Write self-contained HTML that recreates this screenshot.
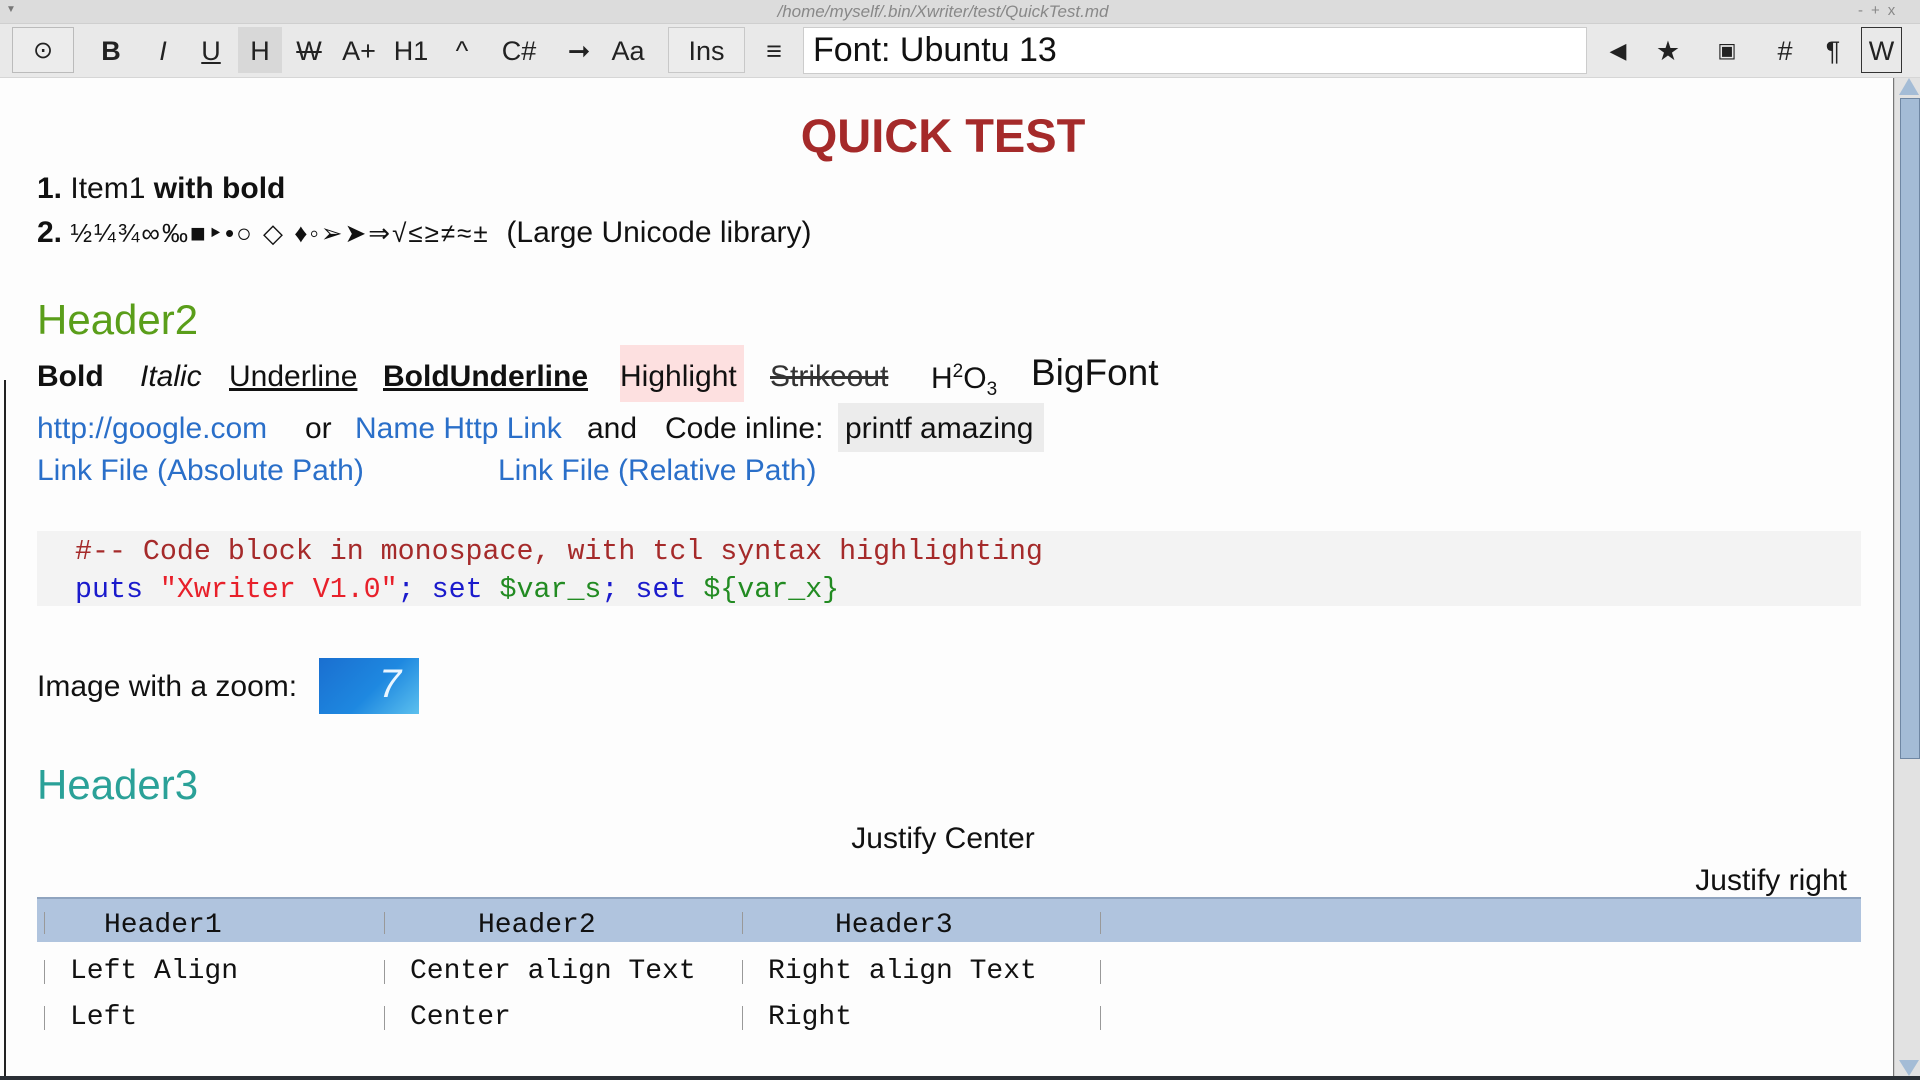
<!DOCTYPE html>
<html><head><meta charset="utf-8">
<style>
*{margin:0;padding:0;box-sizing:border-box}
body{width:1920px;height:1080px;overflow:hidden;background:#fdfdfd;font-family:"Liberation Sans","DejaVu Sans",sans-serif;position:relative;color:#111}
.a{position:absolute;white-space:nowrap;line-height:1}
.m{font-family:"Liberation Mono","DejaVu Sans Mono",monospace}
.tb{position:absolute;top:27px;height:48px;line-height:48px;font-size:27px;color:#222;text-align:center}
.blue{color:#2a6fc9}
</style></head><body>
<div class="a" style="left:0;top:0;width:1920px;height:24px;background:#dcdcdc;border-bottom:1px solid #cfcfcf"></div>
<div class="a" style="left:6px;top:5px;font-size:10px;color:#777">▼</div>
<div class="a" style="left:0;width:1886px;top:3px;text-align:center;font-size:17px;color:#888;font-style:italic">/home/myself/.bin/Xwriter/test/QuickTest.md</div>
<div class="a" style="left:1858px;top:3px;font-size:15px;color:#888;letter-spacing:8px">-+x</div>
<div class="a" style="left:0;top:24px;width:1920px;height:54px;background:#e9e9e9;border-bottom:1px solid #d6d6d6"></div>
<div class="a" style="left:12px;top:27px;width:62px;height:46px;border:1px solid #bbb;background:#ececec"></div>
<div class="a" style="left:238px;top:27px;width:44px;height:46px;background:#d8d8d8"></div>
<div class="a" style="left:668px;top:27px;width:77px;height:46px;border:1px solid #c8c8c8;background:#ececec"></div>
<div class="a" style="left:1861px;top:27px;width:41px;height:46px;border:1px solid #333"></div>
<div class="tb" style="left:12px;width:62px;font-size:24px">⊙</div>
<div class="tb" style="left:91px;width:40px;font-weight:bold">B</div>
<div class="tb" style="left:143px;width:40px;font-style:italic">I</div>
<div class="tb" style="left:191px;width:40px;text-decoration:underline">U</div>
<div class="tb" style="left:240px;width:40px">H</div>
<div class="tb" style="left:289px;width:40px;text-decoration:line-through">W</div>
<div class="tb" style="left:334px;width:50px">A+</div>
<div class="tb" style="left:386px;width:50px">H1</div>
<div class="tb" style="left:442px;width:40px">^</div>
<div class="tb" style="left:494px;width:50px">C#</div>
<div class="tb" style="left:559px;width:40px">➞</div>
<div class="tb" style="left:603px;width:50px">Aa</div>
<div class="tb" style="left:668px;width:77px">Ins</div>
<div class="tb" style="left:759px;width:30px;font-weight:bold">≡</div>
<div class="a" style="left:803px;top:27px;width:784px;height:47px;background:#fff;border:1px solid #ccc;font-size:34px;line-height:45px;padding-left:9px;color:#111">Font: Ubuntu 13</div>
<div class="tb" style="left:1603px;width:30px;font-size:22px">◀</div>
<div class="tb" style="left:1653px;width:30px">★</div>
<div class="tb" style="left:1712px;width:30px;font-size:20px">▣</div>
<div class="tb" style="left:1770px;width:30px">#</div>
<div class="tb" style="left:1818px;width:30px">¶</div>
<div class="tb" style="left:1861px;width:41px">W</div>
<div class="a" style="left:4px;top:380px;width:2px;height:700px;background:#222"></div>
<div class="a" style="left:0;width:1886px;top:112px;text-align:center;font-size:47px;font-weight:bold;color:#a52a2a">QUICK TEST</div>
<div class="a" style="left:37px;top:174px;font-size:30px"><b>1.</b> Item1 <b>with bold</b></div>
<div class="a" style="left:37px;top:218px;font-size:30px"><b>2.</b> <span style="font-size:26px;letter-spacing:2px">½¼¾∞‰■‣•○ ◇ ♦◦➢➤⇒√≤≥≠≈±</span>&nbsp; (Large Unicode library)</div>
<div class="a" style="left:37px;top:299px;font-size:42px;color:#5a9e1a">Header2</div>
<div class="a" style="left:620px;top:345px;width:124px;height:57px;background:#fde0e0"></div>
<div class="a" style="left:838px;top:403px;width:206px;height:49px;background:#ececec"></div>
<div class="a" style="left:37px;top:362px;font-size:30px;font-weight:bold">Bold</div>
<div class="a" style="left:140px;top:362px;font-size:30px;font-style:italic">Italic</div>
<div class="a" style="left:229px;top:362px;font-size:30px;text-decoration:underline">Underline</div>
<div class="a" style="left:383px;top:362px;font-size:30px;font-weight:bold;text-decoration:underline">BoldUnderline</div>
<div class="a" style="left:620px;top:362px;font-size:30px">Highlight</div>
<div class="a" style="left:770px;top:362px;font-size:30px;text-decoration:line-through;color:#333">Strikeout</div>
<div class="a" style="left:931px;top:362px;font-size:30px">H<sup style="font-size:19px">2</sup>O<sub style="font-size:19px">3</sub></div>
<div class="a" style="left:1031px;top:354px;font-size:37px">BigFont</div>
<div class="a blue" style="left:37px;top:414px;font-size:30px">http://google.com</div>
<div class="a" style="left:305px;top:414px;font-size:30px">or</div>
<div class="a blue" style="left:355px;top:414px;font-size:30px">Name Http Link</div>
<div class="a" style="left:587px;top:414px;font-size:30px">and</div>
<div class="a" style="left:665px;top:414px;font-size:30px">Code inline:</div>
<div class="a" style="left:845px;top:414px;font-size:30px">printf amazing</div>
<div class="a blue" style="left:37px;top:456px;font-size:30px">Link File (Absolute Path)</div>
<div class="a blue" style="left:498px;top:456px;font-size:30px">Link File (Relative Path)</div>
<div class="a" style="left:37px;top:531px;width:1824px;height:75px;background:#f3f3f3"></div>
<div class="a m" style="left:75px;top:538px;font-size:28.3px;color:#a52a2a">#-- Code block in monospace, with tcl syntax highlighting</div>
<div class="a m" style="left:75px;top:576px;font-size:28.3px;color:#1a1acc">puts <span style="color:#e8202a">"Xwriter V1.0"</span>; set <span style="color:#228b22">$var_s</span>; set <span style="color:#228b22">${var_x}</span></div>
<div class="a" style="left:37px;top:672px;font-size:30px">Image with a zoom:</div>
<div class="a" style="left:319px;top:658px;width:100px;height:56px;background:linear-gradient(135deg,#1a6fd0,#1e88e0 55%,#5cc0ee);overflow:hidden">
<div style="position:absolute;left:60px;top:6px;font-size:40px;line-height:1;color:#eaf6ff;font-style:italic">7</div></div>
<div class="a" style="left:37px;top:764px;font-size:42px;color:#2aa198">Header3</div>
<div class="a" style="left:0;width:1886px;top:824px;text-align:center;font-size:30px">Justify Center</div>
<div class="a" style="left:1000px;width:847px;top:866px;text-align:right;font-size:30px">Justify right</div>
<div class="a" style="left:37px;top:897px;width:1824px;height:45px;background:#b0c4de;border-top:2px solid #8fa4bf"></div>
<div class="a m" style="left:104px;top:912px;font-size:28px">Header1</div>
<div class="a m" style="left:478px;top:912px;font-size:28px">Header2</div>
<div class="a m" style="left:835px;top:912px;font-size:28px">Header3</div>
<div class="a m" style="left:70px;top:958px;font-size:28px">Left Align</div>
<div class="a m" style="left:410px;top:958px;font-size:28px">Center align Text</div>
<div class="a m" style="left:768px;top:958px;font-size:28px">Right align Text</div>
<div class="a m" style="left:70px;top:1004px;font-size:28px">Left</div>
<div class="a m" style="left:410px;top:1004px;font-size:28px">Center</div>
<div class="a m" style="left:768px;top:1004px;font-size:28px">Right</div>
<div class="a" style="left:44px;top:912px;width:1px;height:22px;background:#999"></div>
<div class="a" style="left:384px;top:912px;width:1px;height:22px;background:#999"></div>
<div class="a" style="left:742px;top:912px;width:1px;height:22px;background:#999"></div>
<div class="a" style="left:1100px;top:912px;width:1px;height:22px;background:#999"></div>
<div class="a" style="left:44px;top:960px;width:1px;height:24px;background:#999"></div>
<div class="a" style="left:384px;top:960px;width:1px;height:24px;background:#999"></div>
<div class="a" style="left:742px;top:960px;width:1px;height:24px;background:#999"></div>
<div class="a" style="left:1100px;top:960px;width:1px;height:24px;background:#999"></div>
<div class="a" style="left:44px;top:1006px;width:1px;height:24px;background:#999"></div>
<div class="a" style="left:384px;top:1006px;width:1px;height:24px;background:#999"></div>
<div class="a" style="left:742px;top:1006px;width:1px;height:24px;background:#999"></div>
<div class="a" style="left:1100px;top:1006px;width:1px;height:24px;background:#999"></div>
<div class="a" style="left:1893px;top:78px;width:1px;height:1000px;background:#777"></div>
<div class="a" style="left:1894px;top:78px;width:26px;height:1000px;background:#e2e2e2;border-left:1px solid #ccc"></div>
<div class="a" style="left:1899px;top:78px;width:0;height:0;border-left:10px solid transparent;border-right:10px solid transparent;border-bottom:17px solid #a4bcd6"></div>
<div class="a" style="left:1900px;top:98px;width:20px;height:661px;background:#a4bcd6;border:1px solid #6f87a3"></div>
<div class="a" style="left:1899px;top:1060px;width:0;height:0;border-left:10px solid transparent;border-right:10px solid transparent;border-top:16px solid #a4bcd6"></div>
<div class="a" style="left:0;top:1076px;width:1920px;height:4px;background:#2a2f35"></div>
</body></html>
